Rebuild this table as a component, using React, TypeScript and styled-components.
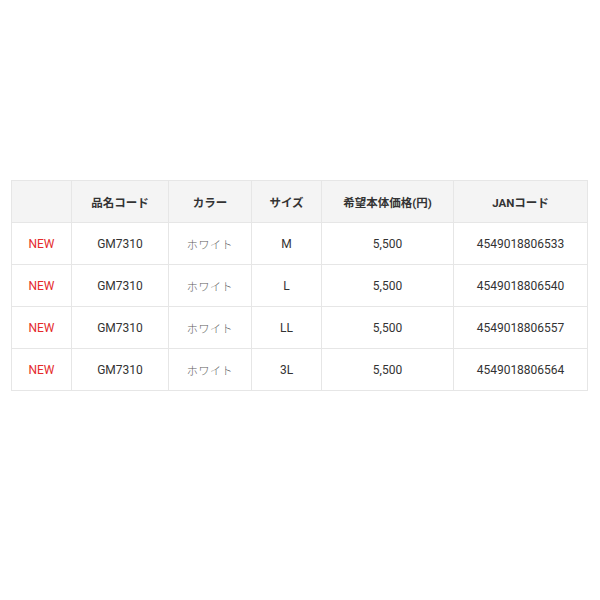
import styled, { createGlobalStyle } from "styled-components";

const GlobalStyle = createGlobalStyle`
  body {
    margin: 0;
    background: #ffffff;
    font-family: Roboto, "Noto Sans CJK JP", sans-serif;
  }
`;

const Page = styled.div`
  padding: 180px 13px 0 11px;
`;

const Table = styled.table`
  width: 576px;
  border-collapse: collapse;
  table-layout: fixed;
  font-size: 12px;
  color: #333333;
`;

const Head = styled.th`
  height: 41px;
  padding: 0;
  background: #f4f4f4;
  border: 1px solid #e6e6e6;
  font-size: 11.5px;
  font-weight: 700;
  text-align: center;
  color: #333333;
`;

const Cell = styled.td<{ $tone?: "new" | "light" }>`
  height: 41px;
  padding: 0;
  border: 1px solid #e6e6e6;
  text-align: center;
  color: ${(p) =>
    p.$tone === "new" ? "#e52b2b" : p.$tone === "light" ? "#5e5e5e" : "#333333"};
  font-size: ${(p) => (p.$tone === "light" ? "11px" : "12px")};
  letter-spacing: ${(p) => (p.$tone === "light" ? "0.6px" : "0")};
  font-weight: ${(p) => (p.$tone === "light" ? 300 : 400)};
`;

const widths = [60, 97, 83, 70, 132, 134];
const headers = ["", "品名コード", "カラー", "サイズ", "希望本体価格(円)", "JANコード"];

const rows = [
  { size: "M", jan: "4549018806533" },
  { size: "L", jan: "4549018806540" },
  { size: "LL", jan: "4549018806557" },
  { size: "3L", jan: "4549018806564" },
];

export default function App() {
  return (
    <Page>
      <GlobalStyle />
      <Table>
        <colgroup>
          {widths.map((w, i) => (
            <col key={i} style={{ width: w }} />
          ))}
        </colgroup>
        <thead>
          <tr>
            {headers.map((h, i) => (
              <Head key={i}>{h}</Head>
            ))}
          </tr>
        </thead>
        <tbody>
          {rows.map((r) => (
            <tr key={r.jan}>
              <Cell $tone="new">NEW</Cell>
              <Cell>GM7310</Cell>
              <Cell $tone="light">ホワイト</Cell>
              <Cell>{r.size}</Cell>
              <Cell>5,500</Cell>
              <Cell>{r.jan}</Cell>
            </tr>
          ))}
        </tbody>
      </Table>
    </Page>
  );
}
